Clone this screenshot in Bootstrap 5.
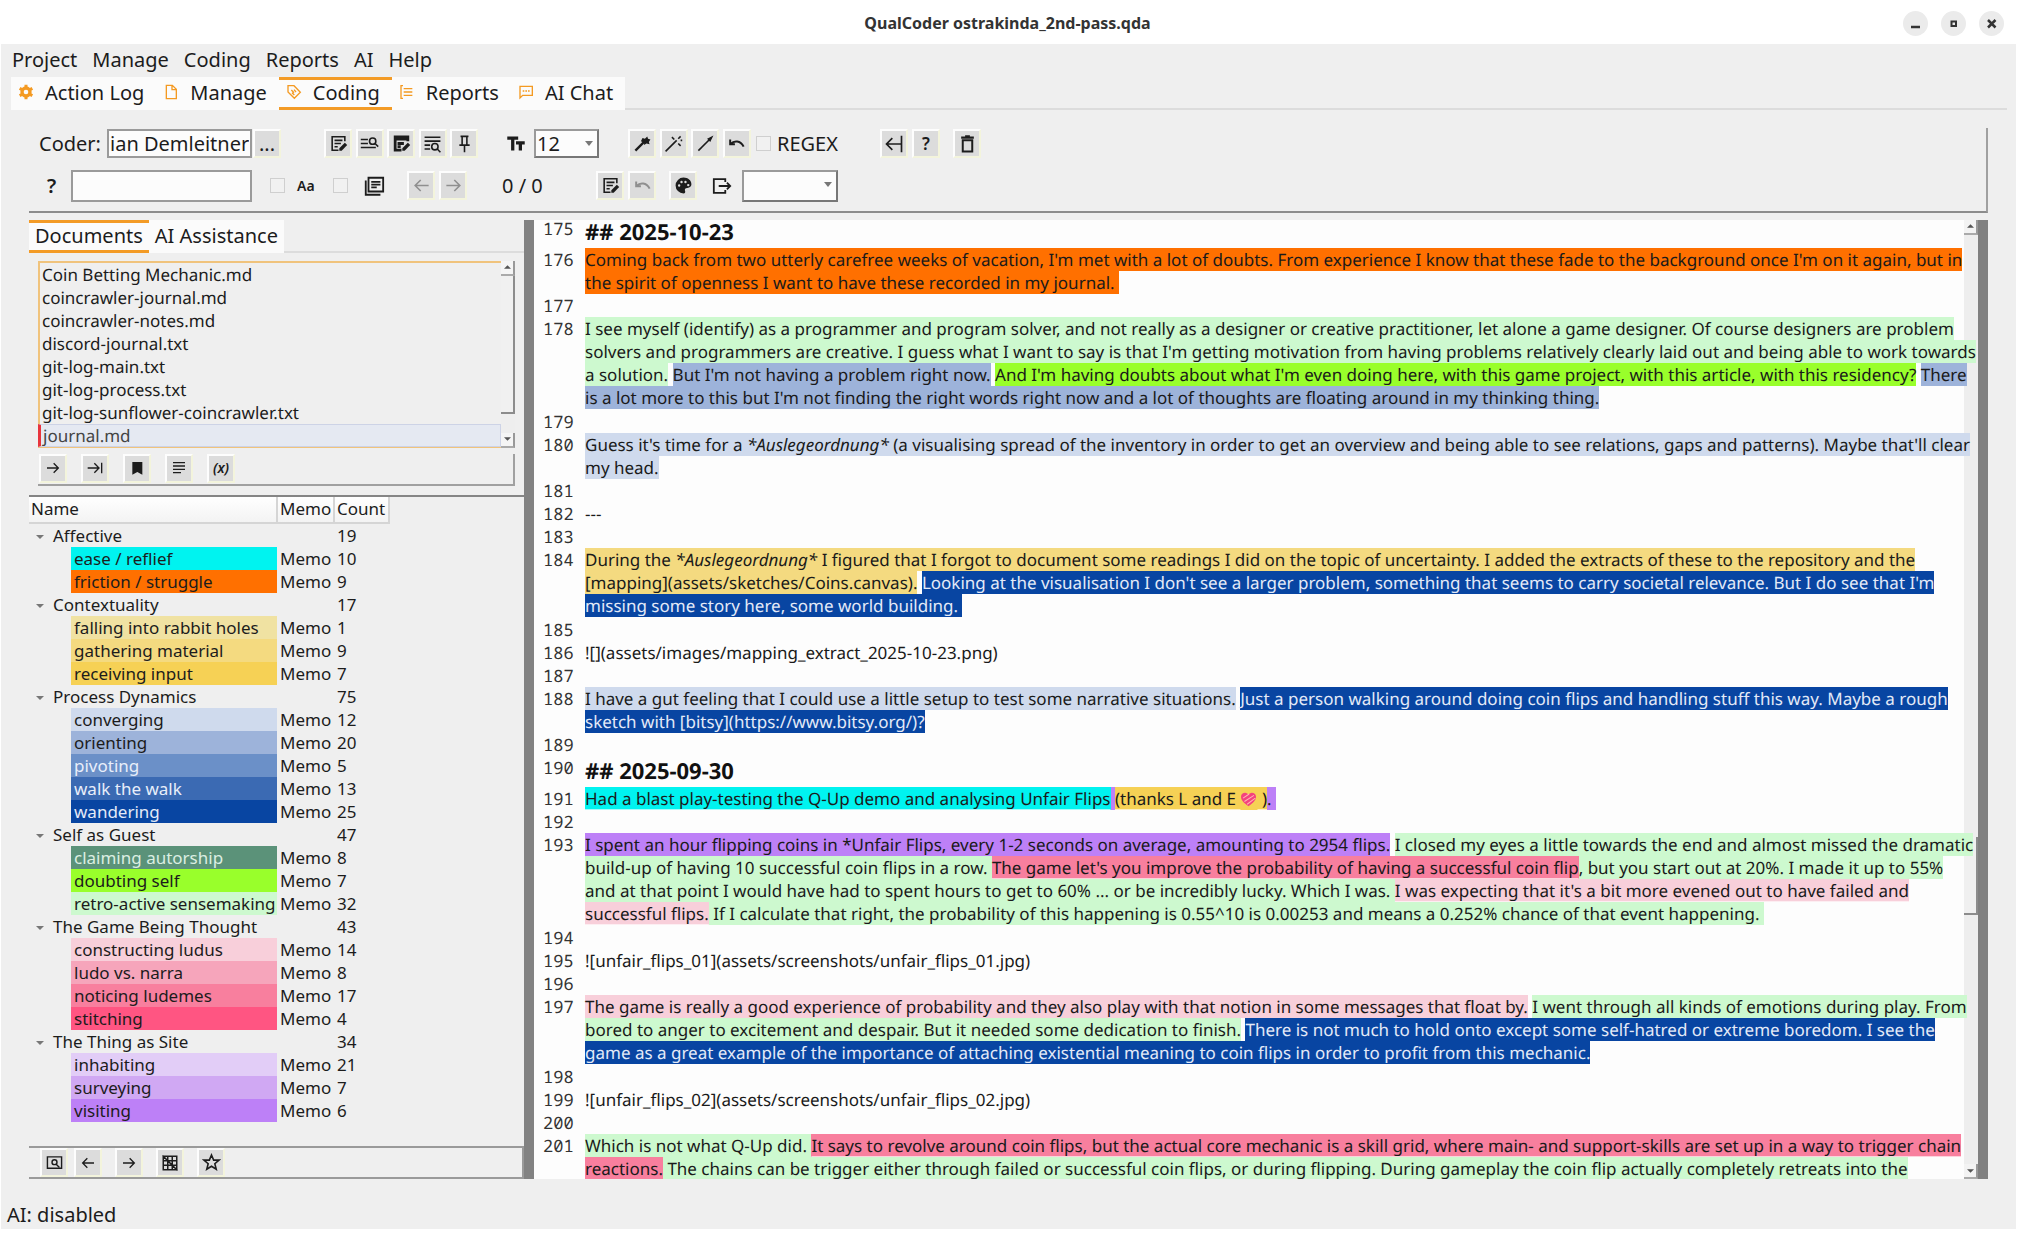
<!DOCTYPE html>
<html lang="en">
<head>
<meta charset="utf-8">
<meta name="viewport" content="width=device-width, initial-scale=1">
<title>QualCoder ostrakinda_2nd-pass.qda</title>
<link rel="stylesheet" href="https://cdn.jsdelivr.net/npm/bootstrap@5.3.0/dist/css/bootstrap.min.css">
<style>
:root { --ui: #efefef; --rule: #8c8c8c; --accent: #f39b26; --paper: #fdfdfd; }
body { font-family: "Noto Sans", "Open Sans", sans-serif; font-size: 20px; line-height: 28px; color: #1c1c1c; background: #fff; }
a, a:hover { color: inherit; text-decoration: none; }
svg { display: block; fill: none; stroke: currentColor; stroke-width: 2; flex: none; }
svg .solid { fill: currentColor; stroke: none; }

/* title bar */
.titlebar { height: 44px; padding-right: 14px; }
.titlebar h1 { font-size: 16px; line-height: 24px; font-weight: 700; color: #333; padding-top: 2px; padding-left: 112px; }
.winbtn { width: 25px; height: 25px; margin-top: 3px; border: 0; padding: 0; border-radius: 50%; background: #ebebeb; color: #333; }
.shell { background: var(--ui); margin: 0 2px 11px 1px; }
.menubar { height: 33px; gap: 15px; padding-left: 11px; }

/* tab strips */
.strip { border-bottom: 2px solid #dcdcdc; }
.strip .tab-btn { border: 0; border-top: 3px solid transparent; border-bottom: 3px solid transparent; background: #fbfbfb; height: 33px; margin-bottom: -2px; padding: 0 12px 0 7px; line-height: 26px; color: #1c1c1c; }
.strip .tab-btn svg { color: #f49a22; margin-right: 11px; margin-bottom: 3px; }
.strip .tab-btn.active { border-color: var(--accent); }
.side .strip .tab-btn { padding: 0 6px; }

/* toolbar */
.tools { margin: 18px 28px 0 28px; padding: 0 0 9px 10px; border-right: 2px solid #a0a0a0; border-bottom: 2px solid var(--rule); gap: 10px; }
.toolrow { height: 32px; }
.tb { width: 28px; height: 29px; padding: 0; border: 2px solid; border-color: #fdfdfd #f3f4dc #f3f4dc #fdfdfd; background: #dcdcdc; color: #1c1c1c; display: flex; align-items: center; justify-content: center; flex: none; font-size: 20px; line-height: 20px; }
.tb:disabled { color: #8f8f8f; }
.five { width: 154px; }
.four { width: 123px; }
.field { border: 2px solid #9a9a9a; border-radius: 0; background: #fcfcfc; padding: 0 1px; height: 29px; color: #1c1c1c; line-height: 24px; }
.tall { height: 32px; }
.tick.form-check-input[type=checkbox] { width: 15px; height: 15px; margin: 0; border: 1px solid #cfcfcf; border-radius: 0; background-color: #f1f1f1; flex: none; }
.combo { position: relative; }
.combo select { appearance: none; width: 100%; border-right-color: #777; border-bottom-color: #777; }
.combo::after { content: ""; position: absolute; right: 6px; top: 12px; border: 4px solid transparent; border-top: 5px solid #777; pointer-events: none; }
.bar-gap { width: 43px; }

/* main area */
.work { margin: 7px 28px 0 28px; }
.side { width: 495px; flex: none; }
.splitter { width: 10px; background: #828282; flex: none; }
.docbox { margin: 8px 9px 0 9px; height: 187px; }
.docs { font-size: 17px; line-height: 23px; border: solid #f0c37c; border-width: 2px 0 1px 2px; text-rendering: geometricPrecision; }
.docs .list-group-item { padding: 0 0 0 2px; border: 0; background: transparent; line-height: 23px; color: #1c1c1c; }
.docs .list-group-item.current { background: #e5e9f2; border: 1px solid #cdd3e6; border-left: 3px solid #e8343c; margin-left: -2px; padding-left: 2px; line-height: 21px; color: #444; }
.scroller { width: 14px; background: #eee; flex: none; }
.scroller .arrow { height: 15px; border: 0; padding: 0; background: #f5f5f5; border-right: 2px solid #999; border-bottom: 2px solid #aaa; display: flex; align-items: center; justify-content: center; border-radius: 0; color: #555; width: 100%; }
.scroller .thumb { border-right: 2px solid #8c8c8c; border-bottom: 2px solid #8c8c8c; background: #f0f0f0; }
.docbox .thumb { height: 138px; }
.doctools { margin: 6px 9px 0 9px; height: 32px; padding-left: 1px; gap: 14px; border: solid #a0a0a0; border-width: 0 2px 2px 0; }
.codes { margin-top: 9px; border-top: 2px solid #858585; }
.codetree { width: 361px; table-layout: fixed; font-size: 17px; border-collapse: collapse; }
.codetree th { font-weight: 400; background: linear-gradient(#fff, #f3f3f3); border: solid #d5d5d5; border-width: 0 2px 2px 0; height: 26px; line-height: 24px; padding: 0 0 0 2px; }
.codetree td { padding: 0 0 0 3px; height: 23px; line-height: 23px; white-space: nowrap; }
.codetree .cat td:first-child { padding-left: 24px; }
.codetree td:last-child { padding-left: 3px; }
.twist { display: inline-block; vertical-align: middle; margin: 0 9px 0 -17px; border: 4px solid transparent; border-top: 4px solid #777; border-bottom: 0; }
.swatch { display: block; margin-left: 42px; padding-left: 3px; }
.codetools { height: 33px; border: solid #9a9a9a; border-width: 2px 2px 2px 0; padding-left: 11px; gap: 13px; }

/* code colours */
.c-ease { background: #00f3f0; } .c-fric { background: #ff7000; }
.c-fall { background: #f0e2a2; } .c-gath { background: #f4da80; } .c-rece { background: #f6d155; }
.c-conv { background: #cfdaed; } .c-orie { background: #9db3da; } .c-pivo { background: #6b90c8; color: #e8eefa; } .c-walk { background: #3b6ab3; color: #e8eefa; } .c-wand { background: #0845a2; color: #e3eaf8; }
.c-clai { background: #5b9279; color: #dbeee2; } .c-doub { background: #99ff2b; } .c-retr { background: #cdf9cf; }
.c-cons { background: #f8cfda; } .c-ludo { background: #f6a5bb; } .c-noti { background: #f87f9e; } .c-stit { background: #ff5582; }
.c-inha { background: #e2cdf7; } .c-surv { background: #d0a8f3; } .c-visi { background: #bd80f7; }
.over { text-decoration: underline 1px rgba(255,255,255,.65); text-underline-offset: 4px; text-decoration-skip-ink: none; }

/* text pane: its lines may run over the scroll track, which lies beneath */
.pane { position: relative; z-index: 1; margin-right: -14px; pointer-events: none; background: linear-gradient(to left, transparent 14px, var(--paper) 14px); overflow: hidden; font-size: 17px; line-height: 23px; color: #1a1a1a; padding-left: 9px; text-rendering: geometricPrecision; }
.pane-text { margin-top: -3px; }
.ln { display: grid; grid-template-columns: 42px 1fr; min-height: 23px; }
.ln > b { font-family: "Noto Sans Mono", "DejaVu Sans Mono", monospace; font-weight: 400; color: #333; line-height: 23px; height: 23px; }
.ln p, .ln h2 { margin: 0; line-height: 23px; }
.ln .tallp { margin-bottom: 1px; }
.ln h2 { font-size: 22px; line-height: 30px; padding-bottom: 1px; font-weight: 700; color: #111; }
.heart { display: inline-block; vertical-align: -2px; }
.textscroll { width: 14px; }
.textscroll .thumb { margin-top: 602px; height: 78px; }
.textscroll .arrow { background: #f3f3f3; }
.edge { width: 10px; background: #808080; flex: none; }
.statusline { height: 50px; padding: 22px 0 0 6px; }
</style>
<script src="https://cdn.jsdelivr.net/npm/bootstrap@5.3.0/dist/js/bootstrap.bundle.min.js"></script>
</head>
<body class="vh-100 d-flex flex-column overflow-hidden">

<svg width="0" height="0" class="position-absolute" aria-hidden="true">
  <symbol id="note" viewBox="0 0 24 24"><path d="M20 9V3.500H4V20.500H12M7 8H17M7 12H15M7 16H11"/><path class="solid" d="M13 21v-3l7-7 3 3-7 7z"/></symbol>
  <symbol id="undo" viewBox="0 0 24 24"><path d="M4 7V13H10M4.500 12.500C9 8 17 8 21 16" stroke-width="2.500"/></symbol>
  <symbol id="left" viewBox="0 0 24 24"><path d="M21 12H4M11 5L4 12L11 19"/></symbol>
  <symbol id="right" viewBox="0 0 24 24"><path d="M3 12H20M13 5L20 12L13 19"/></symbol>
  <symbol id="up-tri" viewBox="0 0 8 4"><path class="solid" d="M0 4L4 0L8 4z"/></symbol>
  <symbol id="down-tri" viewBox="0 0 8 4"><path class="solid" d="M0 0L4 4L8 0z"/></symbol>
</svg>

<header class="titlebar d-flex align-items-center">
  <h1 class="flex-grow-1 text-center m-0">QualCoder ostrakinda_2nd-pass.qda</h1>
  <div class="d-flex" style="gap:13px">
    <button class="winbtn" aria-label="Minimize"><svg width="25" height="25" viewBox="0 0 25 25"><path d="M8 16H17" stroke-width="2.500"/></svg></button>
    <button class="winbtn" aria-label="Maximize"><svg width="25" height="25" viewBox="0 0 25 25"><path d="M10.500 10.500H15V15H10.500z"/></svg></button>
    <button class="winbtn" aria-label="Close"><svg width="25" height="25" viewBox="0 0 25 25"><path d="M9 9L16.500 16.500M16.500 9L9 16.500" stroke-width="2.500"/></svg></button>
  </div>
</header>

<div class="shell flex-grow-1 d-flex flex-column overflow-hidden">
  <nav class="menubar d-flex align-items-center">
    <a href="#">Project</a><a href="#">Manage</a><a href="#">Coding</a><a href="#">Reports</a><a href="#">AI</a><a href="#">Help</a>
  </nav>

  <div class="strip d-flex" role="tablist" style="margin:0 9px 0 10px">
    <button class="tab-btn d-flex align-items-center" role="tab"><svg width="16" height="16" viewBox="0 0 24 24"><circle cx="12" cy="12" r="6" stroke-width="5"/><path d="M12 1V6M12 18V23M2.500 6.500L7 9M17 15L21.500 17.500M2.500 17.500L7 15M17 9L21.500 6.500" stroke-width="4.500"/></svg>Action Log</button>
    <button class="tab-btn d-flex align-items-center" role="tab"><svg width="16" height="16" viewBox="0 0 24 24"><path d="M5 2H14L20 8V22H5zM13.500 2V8.500H20"/></svg>Manage</button>
    <button class="tab-btn active d-flex align-items-center" role="tab" aria-selected="true"><svg width="16" height="16" viewBox="0 0 24 24"><path d="M3 2.500H12L21.500 12.500L12.500 21.500L3 12zM8 9L12 13M12 8.500L15 12M9 13L12.500 16.500"/></svg>Coding</button>
    <button class="tab-btn d-flex align-items-center" role="tab"><svg width="16" height="16" viewBox="0 0 24 24"><path d="M6 2.500H3V21.500H6M7 7H20M7 12H20M7 17H20" /></svg>Reports</button>
    <button class="tab-btn d-flex align-items-center" role="tab"><svg width="16" height="16" viewBox="0 0 24 24"><path d="M3 21V3.500H21.500V17H7z"/><path d="M7 10.500H9.500M11 10.500H13.500M15 10.500H17.500"/></svg>AI Chat</button>
  </div>

  <section class="tools d-flex flex-column">
    <div class="toolrow d-flex align-items-center">
      <label for="coder" style="width:68px">Coder:</label>
      <input id="coder" class="field" style="width:145px" value="ian Demleitner">
      <button class="tb" style="margin-left:1px">...</button>
      <div class="bar-gap"></div>
      <div class="five d-flex justify-content-between">
        <button class="tb" aria-label="Memo"><svg width="19" height="19"><use href="#note"/></svg></button>
        <button class="tb" aria-label="Find annotation"><svg width="19" height="19" viewBox="0 0 24 24"><path d="M1 7H10M1 12H10M1 17H20"/><circle cx="16" cy="9" r="4"/><path d="M19 12L23 16"/></svg></button>
        <button class="tb" aria-label="Code memo"><svg width="19" height="19" viewBox="0 0 24 24"><path d="M20 9V3.500H4V20.500H12M5 6.500H19M7 12H15M7 16H11" stroke-width="3.500"/><path class="solid" d="M13 21v-3l7-7 3 3-7 7z"/></svg></button>
        <button class="tb" aria-label="Search text"><svg width="19" height="19" viewBox="0 0 24 24"><path d="M2 4H22M2 9H22M2 14H9M2 19H9"/><circle cx="15" cy="16" r="4"/><path d="M18 19L22 23"/></svg></button>
        <button class="tb" aria-label="Pin"><svg width="19" height="19" viewBox="0 0 24 24"><path d="M7 3H17M9 3V13M15 3V13M5.500 14H18.500M12 14V23"/></svg></button>
      </div>
      <svg style="margin:0 9px 0 29px" width="18" height="16" viewBox="0 0 24 22"><path d="M0 3H15M7.500 3V20M12 9.500H24M18 9.500V20" stroke-width="4.500"/></svg>
      <div class="combo" style="width:65px"><select class="field" aria-label="Font size"><option>12</option><option>14</option></select></div>
      <div class="four d-flex justify-content-between" style="margin-left:29px">
        <button class="tb" aria-label="Auto code"><svg width="19" height="19" viewBox="0 0 24 24"><path d="M3 21L15 9" stroke-width="3"/><path class="solid" d="M12 5l3 1 3-3 1 3 3 1-2 3 1 3-4-1-3 2v-3l-4-2z"/></svg></button>
        <button class="tb" aria-label="Auto code sentences"><svg width="19" height="19" viewBox="0 0 24 24"><path d="M2 22L16 8M18 6L21 3M10 4L13 7M18 12L21 15M21 8H23" stroke-width="2"/></svg></button>
        <button class="tb" aria-label="Auto code paragraph"><svg width="19" height="19" viewBox="0 0 24 24"><path d="M3 21L19 5" /><path class="solid" d="M14 6l8-4-4 8z"/></svg></button>
        <button class="tb" aria-label="Undo auto code"><svg width="19" height="19"><use href="#undo"/></svg></button>
      </div>
      <input class="form-check-input tick" style="margin-left:5px" type="checkbox" id="regex"><label for="regex" style="width:109px;padding-left:6px">REGEX</label>
      <div class="d-flex" style="gap:4px">
        <button class="tb" aria-label="Show original"><svg width="20" height="20" viewBox="0 0 24 24"><path d="M21 2V22M20 12H3M10 5L3 12L10 19"/></svg></button>
        <button class="tb fw-semibold" style="font-size:17px">?</button>
      </div>
      <button class="tb" style="margin-left:13px" aria-label="Delete"><svg width="19" height="19" viewBox="0 0 24 24"><path d="M4 4.500H20M9 3H15" stroke-width="3"/><path d="M6 8V22H18V8z" stroke-width="2.500"/></svg></button>
    </div>
    <div class="toolrow d-flex align-items-center">
      <label for="find" class="fw-semibold" style="width:24px;margin-left:8px">?</label>
      <input id="find" class="field tall" style="width:181px;margin-right:18px">
      <input class="form-check-input tick" type="checkbox" id="case"><label for="case" class="fw-semibold" style="font-size:14px;width:48px;padding-left:12px">Aa</label>
      <input class="form-check-input tick" type="checkbox" id="allfiles">
      <label for="allfiles" style="margin:0 22px 0 15px" aria-label="All files"><svg width="22" height="22" viewBox="0 0 24 24"><path d="M6 3H22V18H6zM9 7.500H19M9 10.500H19M9 13.500H15M3 6V21.500H19"/></svg></label>
      <div class="d-flex" style="gap:4px"><button class="tb" disabled aria-label="Previous"><svg width="19" height="19"><use href="#left"/></svg></button><button class="tb" disabled aria-label="Next"><svg width="19" height="19"><use href="#right"/></svg></button></div>
      <span style="width:94px;margin-left:35px">0 / 0</span>
      <div class="d-flex" style="gap:4px"><button class="tb" aria-label="Annotate"><svg width="19" height="19"><use href="#note"/></svg></button><button class="tb" disabled aria-label="Undo"><svg width="19" height="19"><use href="#undo"/></svg></button></div>
      <button class="tb" style="margin-left:13px" aria-label="Colours"><svg width="19" height="19" viewBox="0 0 24 24"><path class="solid" fill-rule="evenodd" d="M12 2a10 10 0 1 0 0 20c2 0 2.500-1.500 2-3-1-3 1-4 3-4 3 0 5-2 5-4.500C22 5.500 17.500 2 12 2zM6.500 10.500a1.500 1.500 0 1 1 0 3 1.500 1.500 0 0 1 0-3zM9.500 6a1.500 1.500 0 1 1 0 3 1.500 1.500 0 0 1 0-3zM14.500 6a1.500 1.500 0 1 1 0 3 1.500 1.500 0 0 1 0-3zM18 10a1.500 1.500 0 1 1 0 3 1.500 1.500 0 0 1 0-3z"/></svg></button>
      <svg style="margin:0 10px 0 15px" width="20" height="18" viewBox="0 0 24 22"><path d="M16 6V2.500H2V19.500H16V16M8 11H22M18 7L22 11L18 15" stroke-width="2.200"/></svg>
      <div class="combo" style="width:96px"><select class="field tall" aria-label="Export"><option></option><option>HTML</option></select></div>
    </div>
  </section>

  <main class="work flex-grow-1 d-flex overflow-hidden">
    <aside class="side d-flex flex-column">
      <div class="strip d-flex" role="tablist">
        <button class="tab-btn active" role="tab" aria-selected="true">Documents</button>
        <button class="tab-btn" role="tab">AI Assistance</button>
      </div>
      <div class="docbox d-flex">
        <div class="docs list-group rounded-0 flex-grow-1">
          <a href="#" class="list-group-item">Coin Betting Mechanic.md</a>
          <a href="#" class="list-group-item">coincrawler-journal.md</a>
          <a href="#" class="list-group-item">coincrawler-notes.md</a>
          <a href="#" class="list-group-item">discord-journal.txt</a>
          <a href="#" class="list-group-item">git-log-main.txt</a>
          <a href="#" class="list-group-item">git-log-process.txt</a>
          <a href="#" class="list-group-item">git-log-sunflower-coincrawler.txt</a>
          <a href="#" class="list-group-item current">journal.md</a>
        </div>
        <div class="scroller d-flex flex-column">
          <button class="arrow" aria-label="Scroll up"><svg width="7" height="4"><use href="#up-tri"/></svg></button>
          <div class="thumb"></div>
          <button class="arrow mt-auto" aria-label="Scroll down"><svg width="7" height="4"><use href="#down-tri"/></svg></button>
        </div>
      </div>
      <div class="doctools d-flex">
        <button class="tb" aria-label="Next file"><svg width="16" height="16"><use href="#right"/></svg></button>
        <button class="tb" aria-label="Latest file"><svg width="16" height="16" viewBox="0 0 24 24"><path d="M1 12H17M11 5L18 12L11 19M22 4V20"/></svg></button>
        <button class="tb" aria-label="Bookmark"><svg width="16" height="16" viewBox="0 0 24 24"><path class="solid" d="M5 3H20V22L12.500 18L5 22z"/></svg></button>
        <button class="tb" aria-label="File list"><svg width="16" height="16" viewBox="0 0 24 24"><path d="M3 4H21M3 9H21M3 14H21M3 19H15"/></svg></button>
        <button class="tb fst-italic fw-semibold" style="font-size:14px">(x)</button>
      </div>
      <div class="codes flex-grow-1 overflow-hidden">
        <table class="codetree">
          <colgroup><col style="width:248px"><col style="width:57px"><col></colgroup>
          <thead><tr><th>Name</th><th>Memo</th><th>Count</th></tr></thead>
          <tbody>
            <tr class="cat"><td><i class="twist"></i>Affective</td><td></td><td>19</td></tr>
            <tr><td class="p-0"><span class="swatch c-ease">ease / reflief</span></td><td>Memo</td><td>10</td></tr>
            <tr><td class="p-0"><span class="swatch c-fric">friction / struggle</span></td><td>Memo</td><td>9</td></tr>
            <tr class="cat"><td><i class="twist"></i>Contextuality</td><td></td><td>17</td></tr>
            <tr><td class="p-0"><span class="swatch c-fall">falling into rabbit holes</span></td><td>Memo</td><td>1</td></tr>
            <tr><td class="p-0"><span class="swatch c-gath">gathering material</span></td><td>Memo</td><td>9</td></tr>
            <tr><td class="p-0"><span class="swatch c-rece">receiving input</span></td><td>Memo</td><td>7</td></tr>
            <tr class="cat"><td><i class="twist"></i>Process Dynamics</td><td></td><td>75</td></tr>
            <tr><td class="p-0"><span class="swatch c-conv">converging</span></td><td>Memo</td><td>12</td></tr>
            <tr><td class="p-0"><span class="swatch c-orie">orienting</span></td><td>Memo</td><td>20</td></tr>
            <tr><td class="p-0"><span class="swatch c-pivo">pivoting</span></td><td>Memo</td><td>5</td></tr>
            <tr><td class="p-0"><span class="swatch c-walk">walk the walk</span></td><td>Memo</td><td>13</td></tr>
            <tr><td class="p-0"><span class="swatch c-wand">wandering</span></td><td>Memo</td><td>25</td></tr>
            <tr class="cat"><td><i class="twist"></i>Self as Guest</td><td></td><td>47</td></tr>
            <tr><td class="p-0"><span class="swatch c-clai">claiming autorship</span></td><td>Memo</td><td>8</td></tr>
            <tr><td class="p-0"><span class="swatch c-doub">doubting self</span></td><td>Memo</td><td>7</td></tr>
            <tr><td class="p-0"><span class="swatch c-retr">retro-active sensemaking</span></td><td>Memo</td><td>32</td></tr>
            <tr class="cat"><td><i class="twist"></i>The Game Being Thought</td><td></td><td>43</td></tr>
            <tr><td class="p-0"><span class="swatch c-cons">constructing ludus</span></td><td>Memo</td><td>14</td></tr>
            <tr><td class="p-0"><span class="swatch c-ludo">ludo vs. narra</span></td><td>Memo</td><td>8</td></tr>
            <tr><td class="p-0"><span class="swatch c-noti">noticing ludemes</span></td><td>Memo</td><td>17</td></tr>
            <tr><td class="p-0"><span class="swatch c-stit">stitching</span></td><td>Memo</td><td>4</td></tr>
            <tr class="cat"><td><i class="twist"></i>The Thing as Site</td><td></td><td>34</td></tr>
            <tr><td class="p-0"><span class="swatch c-inha">inhabiting</span></td><td>Memo</td><td>21</td></tr>
            <tr><td class="p-0"><span class="swatch c-surv">surveying</span></td><td>Memo</td><td>7</td></tr>
            <tr><td class="p-0"><span class="swatch c-visi">visiting</span></td><td>Memo</td><td>6</td></tr>
          </tbody>
        </table>
      </div>
      <div class="codetools d-flex">
        <div class="d-flex" style="gap:6px">
          <button class="tb" aria-label="Find code"><svg width="17" height="17" viewBox="0 0 24 24"><path d="M2 4H22V20H2z"/><circle cx="12" cy="11.500" r="3.500"/><path d="M14 14L19 19"/></svg></button>
          <button class="tb" aria-label="Previous code"><svg width="16" height="16"><use href="#left"/></svg></button>
        </div>
        <button class="tb" aria-label="Next code"><svg width="16" height="16"><use href="#right"/></svg></button>
        <button class="tb" aria-label="Show codes like"><svg width="18" height="18" viewBox="0 0 24 24"><path d="M3 3H21V21H3zM3 9H21M3 15H21M9 3V21M15 3V21M2 2L22 22"/></svg></button>
        <button class="tb" aria-label="Important"><svg width="19" height="19" viewBox="0 0 24 24"><path d="M12 2.500L14.700 9H21.500L16.200 13.500L18 20.500L12 16.700L6 20.500L7.800 13.500L2.500 9H9.300z"/></svg></button>
      </div>
    </aside>
    <div class="splitter"></div>
    <article class="pane flex-grow-1"><div class="pane-text">
      <div class="ln"><b>175</b><h2>## 2025-10-23</h2></div>
      <div class="ln"><b>176</b><p><span class="c-fric">Coming back from two utterly carefree weeks of vacation, I'm met with a lot of doubts. From experience I know that these fade to the background once I'm on it again, but in the spirit of openness I want to have these recorded in my journal.&nbsp;</span></p></div>
      <div class="ln"><b>177</b></div>
      <div class="ln"><b>178</b><p class="tallp"><span class="c-retr">I see myself (identify) as a programmer and program solver, and not really as a designer or creative practitioner, let alone a game designer. Of course designers are problem solvers and programmers are creative. I guess what I want to say is that I'm getting motivation from having problems relatively clearly laid out and being able to work towards a solution.</span> <span class="c-orie">But I'm not having a problem right now.</span> <span class="c-doub">And I'm having doubts about what I'm even doing here, with this game project, with this article, with this residency?</span> <span class="c-orie">There is a lot more to this but I'm not finding the right words right now and a lot of thoughts are floating around in my thinking thing.</span></p></div>
      <div class="ln"><b>179</b></div>
      <div class="ln"><b>180</b><p><span class="c-conv">Guess it's time for a <em>*Auslegeordnung*</em> (a visualising spread of the inventory in order to get an overview and being able to see relations, gaps and patterns). Maybe that'll clear my head.</span></p></div>
      <div class="ln"><b>181</b></div>
      <div class="ln"><b>182</b><p>---</p></div>
      <div class="ln"><b>183</b></div>
      <div class="ln"><b>184</b><p class="tallp"><span class="c-gath">During the <em>*Auslegeordnung*</em> I figured that I forgot to document some readings I did on the topic of uncertainty. I added the extracts of these to the repository and the [mapping](assets/sketches/Coins.canvas).</span> <span class="c-wand">Looking at the visualisation I don't see a larger problem, something that seems to carry societal relevance. But I do see that I'm missing some story here, some world building.&nbsp;</span></p></div>
      <div class="ln"><b>185</b></div>
      <div class="ln"><b>186</b><p>![](assets/images/mapping_extract_2025-10-23.png)</p></div>
      <div class="ln"><b>187</b></div>
      <div class="ln"><b>188</b><p><span class="c-conv">I have a gut feeling that I could use a little setup to test some narrative situations.</span> <span class="c-wand">Just a person walking around doing coin flips and handling stuff this way. Maybe a rough sketch with [bitsy](https://www.bitsy.org/)?</span></p></div>
      <div class="ln"><b>189</b></div>
      <div class="ln"><b>190</b><h2>## 2025-09-30</h2></div>
      <div class="ln"><b>191</b><p><span class="c-ease over">Had a blast play-testing the Q-Up demo and analysing Unfair Flips</span><span class="c-visi"> </span><span class="c-rece over">(thanks L and E <svg class="heart" width="17" height="15" viewBox="0 0 24 22"><path d="M12 21C5 16 1 12 1 7C1 3 4 1 7 1C9.500 1 11 2.500 12 4C13 2.500 14.500 1 17 1C20 1 23 3 23 7C23 12 19 16 12 21z" fill="#f4427e" stroke="none"/><path d="M4 9L13 3M6 14L20 5M10 18L22 9" stroke="#ffb3b0" stroke-width="1.500"/></svg> )</span><span class="c-visi">.&nbsp;</span></p></div>
      <div class="ln"><b>192</b></div>
      <div class="ln"><b>193</b><p class="tallp"><span class="c-visi">I spent an hour flipping coins in *Unfair Flips, every 1-2 seconds on average, amounting to 2954 flips.</span> <span class="c-retr">I closed my eyes a little towards the end and almost missed the dramatic build-up of having 10 successful coin flips in a row. </span><span class="c-noti over">The game let's you improve the probability of having a successful coin flip</span><span class="c-retr">, but you start out at 20%. I made it up to 55%<br>and at that point I would have had to spent hours to get to 60% ... or be incredibly lucky. Which I was. </span><span class="c-cons over">I was expecting that it's a bit more evened out to have failed and successful flips.</span><span class="c-retr"> If I calculate that right, the probability of this happening is 0.55^10 is 0.00253 and means a 0.252% chance of that event happening.&nbsp;</span></p></div>
      <div class="ln"><b>194</b></div>
      <div class="ln"><b>195</b><p>![unfair_flips_01](assets/screenshots/unfair_flips_01.jpg)</p></div>
      <div class="ln"><b>196</b></div>
      <div class="ln"><b>197</b><p class="tallp"><span class="c-cons">The game is really a good experience of probability and they also play with that notion in some messages that float by.</span> <span class="c-retr">I went through all kinds of emotions during play. From bored to anger to excitement and despair. But it needed some dedication to finish.</span> <span class="c-wand">There is not much to hold onto except some self-hatred or extreme boredom. I see the game as a great example of the importance of attaching existential meaning to coin flips in order to profit from this mechanic.</span></p></div>
      <div class="ln"><b>198</b></div>
      <div class="ln"><b>199</b><p>![unfair_flips_02](assets/screenshots/unfair_flips_02.jpg)</p></div>
      <div class="ln"><b>200</b></div>
      <div class="ln"><b>201</b><p><span class="c-retr">Which is not what Q-Up did. </span><span class="c-noti over">It says to revolve around coin flips, but the actual core mechanic is a skill grid, where main- and support-skills are set up in a way to trigger chain reactions.</span><span class="c-retr"> The chains can be trigger either through failed or successful coin flips, or during flipping. During gameplay the coin flip actually completely retreats into the</span></p></div>
    </div></article>
    <div class="scroller textscroll d-flex flex-column">
      <button class="arrow" aria-label="Scroll up"><svg width="7" height="4"><use href="#up-tri"/></svg></button>
      <div class="thumb"></div>
      <button class="arrow mt-auto" aria-label="Scroll down"><svg width="7" height="4"><use href="#down-tri"/></svg></button>
    </div>
    <div class="edge"></div>
  </main>
  <footer class="statusline">AI: disabled</footer>
</div>
</body>
</html>
